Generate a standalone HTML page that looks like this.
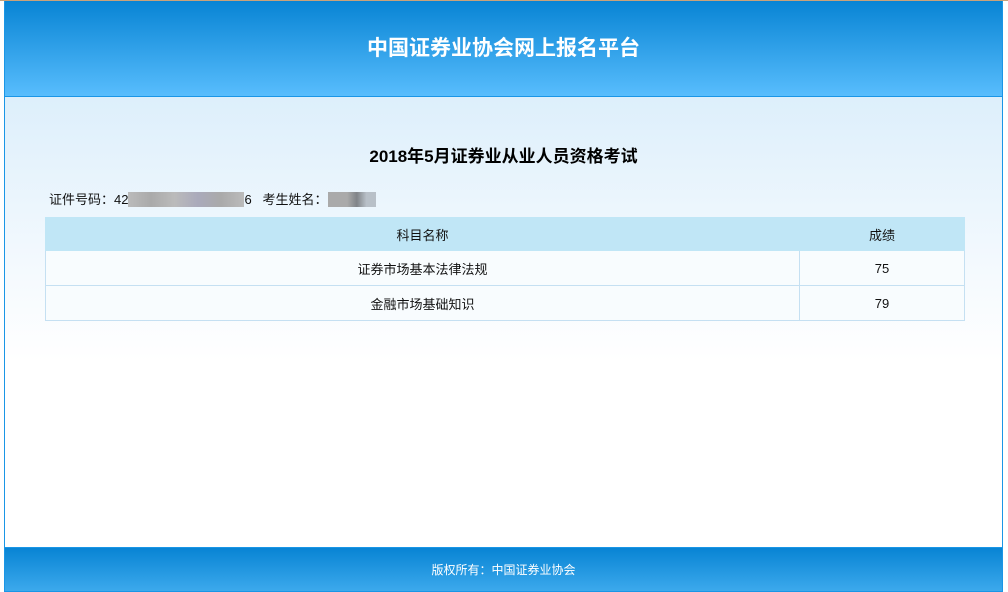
<!DOCTYPE html>
<html><head><meta charset="utf-8"><style>
*{margin:0;padding:0;box-sizing:border-box}
body{width:1008px;height:592px;background:#fff;font-family:"Liberation Sans","Noto Sans CJK SC",sans-serif;position:relative;overflow:hidden}
.frame{position:absolute;left:4px;top:1px;width:999px;height:591px;border:1px solid #1a96e6;border-top:none;background:linear-gradient(#ddeffb 96px,#f3f9fe 260px,#fff 360px)}
.top{position:absolute;left:0;top:0;width:1008px;height:1px;background:#c9a27a}
.hd{position:absolute;left:0;top:0;width:997px;height:96px;background:linear-gradient(#0884d4,#58bdfd);border-bottom:1px solid #1a96e6;color:#fff;font-size:21px;font-weight:bold;text-align:center;line-height:96px}
.title{position:absolute;left:0;top:141px;width:997px;text-align:center;font-size:17px;font-weight:bold;color:#000}
.info{position:absolute;left:44px;top:188px;font-size:13px;color:#111;white-space:nowrap}
.blur{display:inline-block;height:15px;vertical-align:-3px}
table{position:absolute;left:40px;top:216px;width:920px;border-collapse:collapse;font-size:13px;color:#111}
td{border:1px solid #c5e0f2;text-align:center;height:35px}
tr.h td{background:#c0e6f6;height:33px;border-color:#c0e6f6}
tr.r td{background:#f8fcfe}
.ft{position:absolute;left:0;top:546px;width:997px;height:44px;background:linear-gradient(#0884d4,#3ca9ec);color:#fff;font-size:12px;text-align:center;line-height:44px;border-top:1px solid #1a96e6}
</style></head><body>
<div class="top"></div>
<div class="frame">
<div class="hd">中国证券业协会网上报名平台</div>
<div class="title">2018年5月证券业从业人员资格考试</div>
<div class="info">证件号码：42<span class="blur" style="width:116px;background:linear-gradient(90deg,#bbb,#aaa,#bbb,#aab,#aaa,#bbb)"></span>6 &nbsp; 考生姓名：<span class="blur" style="width:48px;background:linear-gradient(90deg,#aaa 40%,#808488 60%,#b8c0c8 80%)"></span></div>
<table>
<tr class="h"><td style="width:754px">科目名称</td><td>成绩</td></tr>
<tr class="r"><td>证券市场基本法律法规</td><td>75</td></tr>
<tr class="r"><td>金融市场基础知识</td><td>79</td></tr>
</table>
<div class="ft">版权所有：中国证券业协会</div>
</div>
</body></html>
